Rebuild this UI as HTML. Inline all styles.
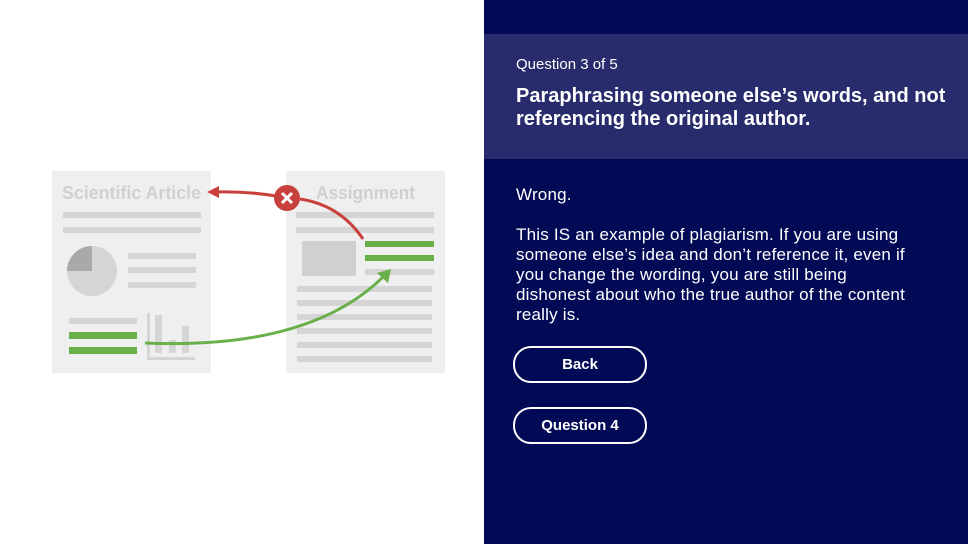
<!DOCTYPE html>
<html><head><meta charset="utf-8"><style>
html,body{margin:0;padding:0}
body{width:968px;height:544px;position:relative;overflow:hidden;background:#fff;font-family:"Liberation Sans",Arial,sans-serif}
#panel{position:absolute;left:484px;top:0;width:484px;height:544px;background:#020a56}
#band{position:absolute;left:0;top:34px;width:484px;height:125px;background:#292c6c}
.t{position:absolute;color:#fff;white-space:nowrap}
.btn{position:absolute;left:29px;width:130px;height:33px;border:2px solid #fff;border-radius:18px;color:#fff;font-weight:bold;font-size:15px;text-align:center;line-height:33px}
</style></head><body>
<svg width="484" height="544" style="position:absolute;left:0;top:0">
<rect x="52" y="171" width="159" height="202" fill="#efefef"/>
<rect x="286" y="171" width="159" height="202" fill="#efefef"/>
<text x="62" y="199" font-family="Liberation Sans" font-weight="bold" font-size="18" fill="#d0d0d0" textLength="139" lengthAdjust="spacingAndGlyphs">Scientific Article</text>
<text x="316" y="199" font-family="Liberation Sans" font-weight="bold" font-size="18" fill="#d0d0d0" textLength="99" lengthAdjust="spacingAndGlyphs">Assignment</text>
<g fill="#d5d5d5">
<rect x="63" y="212" width="138" height="6"/><rect x="63" y="227" width="138" height="6"/>
<rect x="128" y="253" width="68" height="6"/><rect x="128" y="267" width="68" height="6"/><rect x="128" y="282" width="68" height="6"/>
<rect x="69" y="318" width="68" height="6"/>
<rect x="296" y="212" width="138" height="6"/><rect x="296" y="227" width="138" height="6"/>
<rect x="302" y="241" width="54" height="35" fill="#d0d0d0"/>
<rect x="365" y="269" width="69" height="6"/>
<rect x="297" y="286" width="135" height="6"/><rect x="297" y="300" width="135" height="6"/><rect x="297" y="314" width="135" height="6"/><rect x="297" y="328" width="135" height="6"/><rect x="297" y="342" width="135" height="6"/><rect x="297" y="356" width="135" height="6"/>
</g>
<circle cx="92" cy="271" r="25" fill="#d5d5d5"/>
<path d="M92 271 L92 246 A25 25 0 0 0 67 271 Z" fill="#a9a9a9"/>
<g fill="#d5d5d5"><rect x="147" y="313" width="3" height="47"/><rect x="147" y="357" width="48" height="3"/>
<rect x="155" y="315" width="7" height="38"/><rect x="169" y="340" width="7" height="13"/><rect x="182" y="326" width="7" height="27"/></g>
<g fill="#69b04b"><rect x="69" y="332" width="68" height="7"/><rect x="69" y="347" width="68" height="7"/>
<rect x="365" y="241" width="69" height="6"/><rect x="365" y="255" width="69" height="6"/></g>
<path d="M145 343 Q310 350 384 276" stroke="#69b04b" stroke-width="3" fill="none"/>
<path d="M391 269 L377 273 L388 283 Z" fill="#69b04b"/>
<path d="M363 239 Q340 205 300 199" stroke="#c8403b" stroke-width="3" fill="none"/>
<path d="M276 196 Q245 191 216 192" stroke="#c8403b" stroke-width="3" fill="none"/>
<path d="M207 192 L219 186 L219 198 Z" fill="#c8403b"/>
<circle cx="287" cy="198" r="13" fill="#c8403b"/>
<path d="M282 193 L292 203 M292 193 L282 203" stroke="#fff" stroke-width="3"/>
</svg>
<div id="panel">
<div id="band"></div>
<div class="t" style="left:32px;top:56px;font-size:15px">Question 3 of 5</div>
<div class="t" style="left:32px;top:85px;font-size:20px;font-weight:bold;line-height:23px">Paraphrasing someone else’s words, and not<br>referencing the original author.</div>
<div class="t" style="left:32px;top:185px;font-size:17px;letter-spacing:0.2px">Wrong.</div>
<div class="t" style="left:32px;top:225px;font-size:17px;line-height:20px;letter-spacing:0.2px">This IS an example of plagiarism. If you are using<br>someone else’s idea and don’t reference it, even if<br>you change the wording, you are still being<br>dishonest about who the true author of the content<br>really is.</div>
<div class="btn" style="top:346px">Back</div>
<div class="btn" style="top:407px">Question 4</div>
</div>
</body></html>
